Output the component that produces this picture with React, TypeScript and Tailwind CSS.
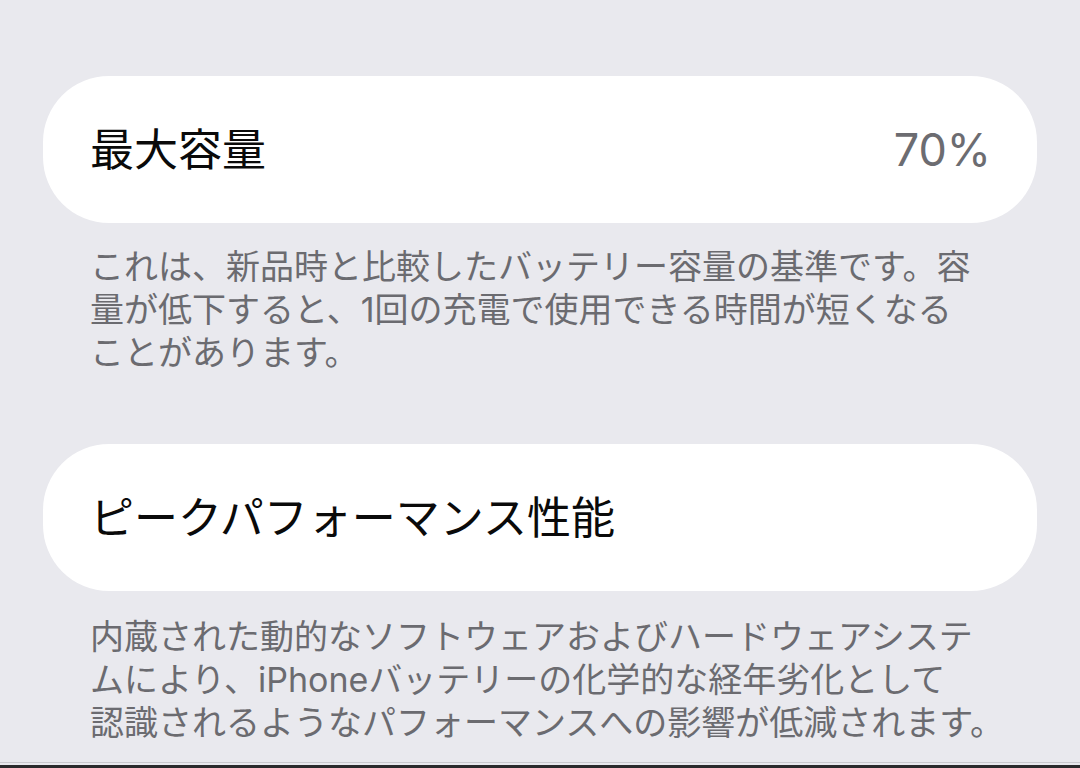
const font = {
  fontFamily: 'Inter, "Noto Sans CJK JP", sans-serif',
};

type RowProps = {
  title: string;
  value?: string;
};

function SettingRow({ title, value }: RowProps) {
  return (
    <div className="mx-[43px] flex h-[147px] items-center justify-between rounded-[66px] bg-white pl-[47px] pr-[46px]">
      <span className="text-[44px] leading-none text-[#0a0a0a]">{title}</span>
      {value && (
        <span className="text-[45px] leading-none text-[#6c6c71]">{value}</span>
      )}
    </div>
  );
}

function Footnote({ lines }: { lines: string[] }) {
  return (
    <div className="px-[90px] text-[34px] leading-[43px] text-[#6b6b70]">
      {lines.map((line, i) => (
        <div key={i} className="whitespace-nowrap">
          {line}
        </div>
      ))}
    </div>
  );
}

export default function App() {
  return (
    <div className="flex h-[768px] w-[1080px] flex-col overflow-hidden bg-[#e9e9ee]" style={font}>
      <div className="flex-1 pt-[76px]">
        <SettingRow title="最大容量" value="70%" />
        <div className="mt-[22px]">
          <Footnote
            lines={[
              'これは、新品時と比較したバッテリー容量の基準です。容',
              '量が低下すると、1回の充電で使用できる時間が短くなる',
              'ことがあります。',
            ]}
          />
        </div>
        <div className="mt-[70px]">
          <SettingRow title="ピークパフォーマンス性能" />
        </div>
        <div className="mt-[24px]">
          <Footnote
            lines={[
              '内蔵された動的なソフトウェアおよびハードウェアシステ',
              'ムにより、iPhoneバッテリーの化学的な経年劣化として',
              '認識されるようなパフォーマンスへの影響が低減されます。',
            ]}
          />
        </div>
      </div>
      <div className="h-[1px] bg-[#c9c9ce]" />
      <div className="h-[2px] bg-[#e9e9ee]" />
      <div className="h-[3px] bg-[#2a2a2c]" />
    </div>
  );
}
